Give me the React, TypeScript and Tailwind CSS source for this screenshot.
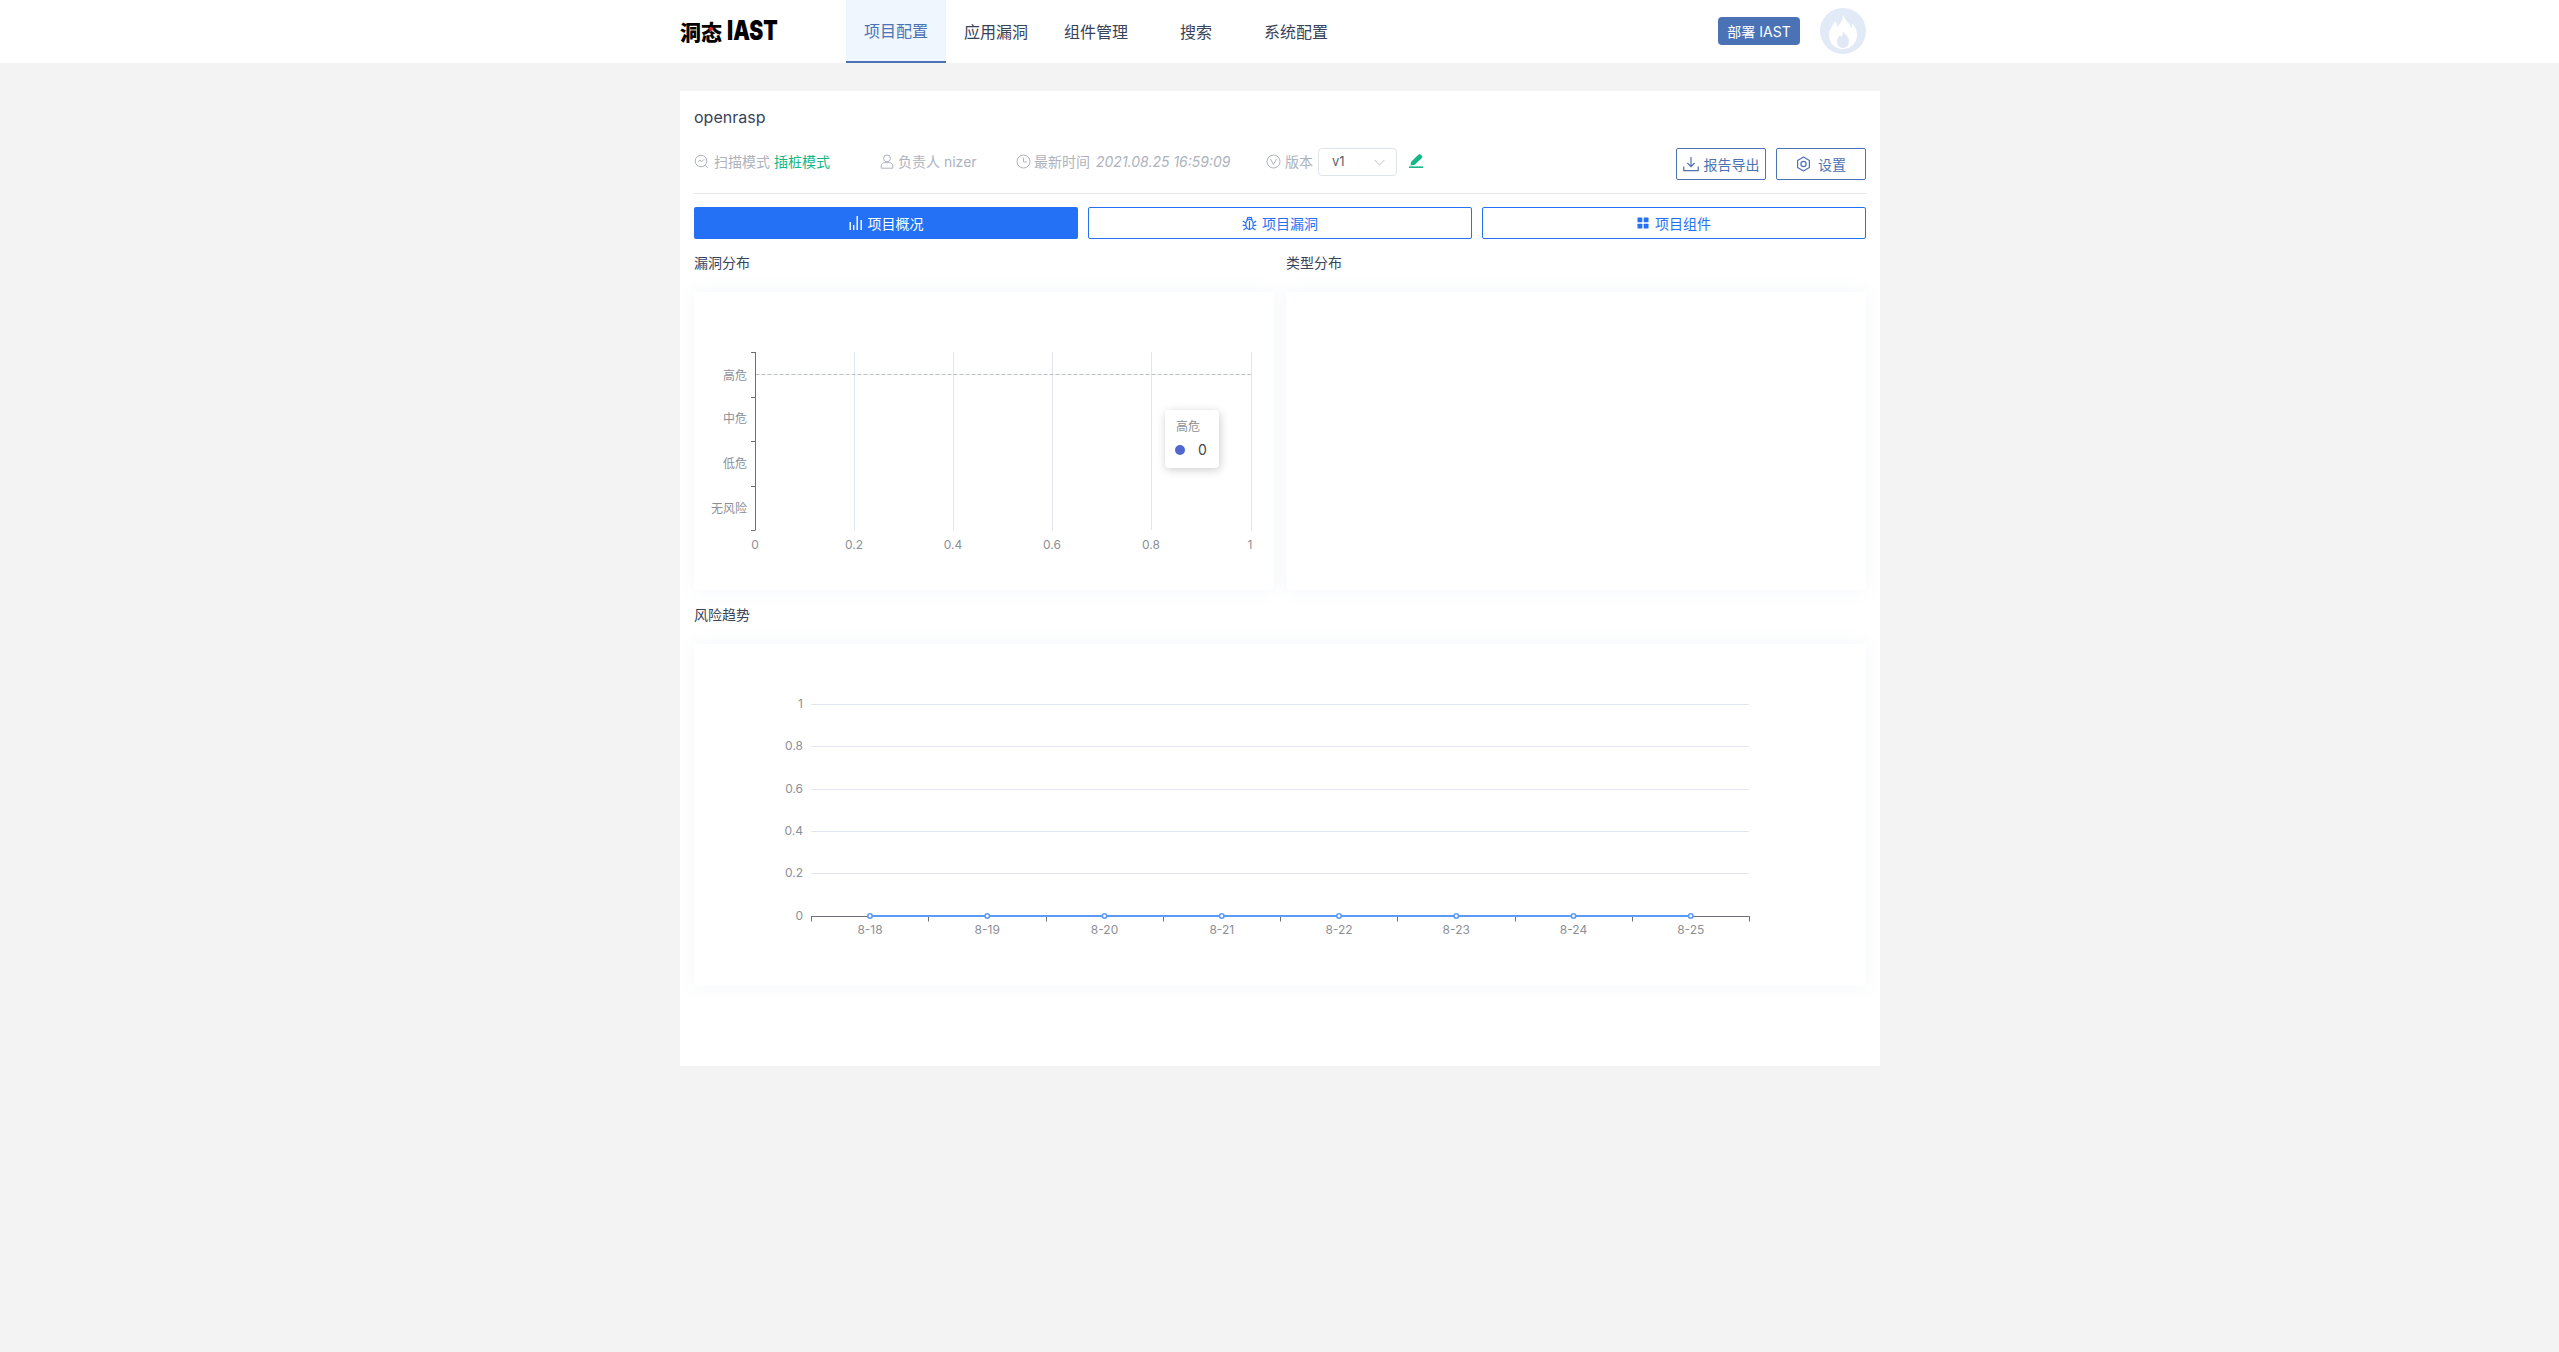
import React from "react";

const FONT = "font-['Inter','Noto_Sans_CJK_SC',sans-serif]";
const svgFont = { fontFamily: "Inter, 'Noto Sans CJK SC', sans-serif" };

function ScanIcon() {
  return (
    <svg width="15" height="15" viewBox="0 0 15 15" fill="none" stroke="#aeb3bd" strokeWidth="1">
      <circle cx="7" cy="7" r="5.8" />
      <path d="M11.2 11.2 L14 14" />
      <path d="M3.8 8 L6 6 L7.6 7.8 L10 5.4" />
    </svg>
  );
}
function UserIcon() {
  return (
    <svg width="14" height="15" viewBox="0 0 14 15" fill="none" stroke="#aeb3bd" strokeWidth="1">
      <circle cx="7" cy="4.4" r="3.4" />
      <path d="M1.2 14.2 V12 C1.2 9.8 3 8.6 4.6 8.6 H9.4 C11 8.6 12.8 9.8 12.8 12 V14.2 Z" />
    </svg>
  );
}
function ClockIcon() {
  return (
    <svg width="15" height="15" viewBox="0 0 15 15" fill="none" stroke="#aeb3bd" strokeWidth="1">
      <circle cx="7.5" cy="7.5" r="6.5" />
      <path d="M7.5 3.6 V8 H11" />
    </svg>
  );
}
function VersionIcon() {
  return (
    <svg width="15" height="15" viewBox="0 0 15 15" fill="none" stroke="#aeb3bd" strokeWidth="1">
      <circle cx="7.5" cy="7.5" r="6.5" />
      <path d="M4.6 5 L7.5 10.6 L10.4 5" />
    </svg>
  );
}
function EditIcon() {
  return (
    <svg width="14" height="14" viewBox="0 0 14 14" fill="#12b886">
      <path d="M2 8 L9 1 L11 0 L13.5 2.4 L12.4 4.6 L5.4 11 L1.6 11.6 Z" />
      <rect x="0" y="12.4" width="14" height="1.6" />
    </svg>
  );
}
function DownloadIcon() {
  return (
    <svg width="16" height="16" viewBox="0 0 16 16" fill="none" stroke="#4a72b4" strokeWidth="1.2">
      <path d="M8 1 V10.5 M4.4 7 L8 10.6 L11.6 7" />
      <path d="M0.8 10.4 V14.6 H15.2 V10.4" />
    </svg>
  );
}
function GearIcon() {
  return (
    <svg width="15" height="16" viewBox="0 0 15 16" fill="none" stroke="#4a72b4" strokeWidth="1.2">
      <path d="M7.5 1 L13.4 4.4 V11.6 L7.5 15 L1.6 11.6 V4.4 Z" strokeLinejoin="round" />
      <circle cx="7.5" cy="8" r="2.6" />
    </svg>
  );
}
function BarsIcon() {
  return (
    <svg width="14" height="14" viewBox="0 0 14 14" fill="#ffffff">
      <rect x="0.5" y="6" width="1.4" height="8" />
      <rect x="4" y="9" width="1.4" height="5" />
      <rect x="7.5" y="0" width="1.4" height="14" />
      <rect x="11.5" y="4" width="1.4" height="10" />
    </svg>
  );
}
function BugIcon() {
  return (
    <svg width="15" height="16" viewBox="0 0 15 16" fill="none" stroke="#2571f5" strokeWidth="1.2">
      <ellipse cx="7.5" cy="9.4" rx="3.7" ry="5" />
      <path d="M5 5.4 C5 3.4 6 2.4 7.5 2.4 C9 2.4 10 3.4 10 5.4" />
      <path d="M7.5 6 V14.4 M5.4 2 L6.2 3 M9.6 2 L8.8 3" />
      <path d="M3.8 8 L0.8 6 M3.8 10.4 H0.6 M4.4 13 L1.4 15 M11.2 8 L14.2 6 M11.2 10.4 H14.4 M10.6 13 L13.6 15" />
    </svg>
  );
}
function GridIcon() {
  return (
    <svg width="12" height="12" viewBox="0 0 12 12" fill="#2571f5">
      <rect x="0.5" y="0.5" width="4.8" height="4.8" rx="0.5" />
      <rect x="6.7" y="0.5" width="4.8" height="4.8" rx="0.5" />
      <rect x="0.5" y="6.7" width="4.8" height="4.8" rx="0.5" />
      <rect x="6.7" y="6.7" width="4.8" height="4.8" rx="0.5" />
    </svg>
  );
}
function FlameAvatar() {
  return (
    <div className="w-[46px] h-[46px] -mt-[1px] rounded-full bg-[#e1eaf6] flex items-center justify-center">
      <svg width="28" height="36" viewBox="0 0 28 36">
        <path
          d="M14 1 C15 7 21 10 22 15 C23 13 23.5 12 23.5 10.5 C26.5 14 28 18 28 22 C28 30 22 36 14 36 C6 36 0 30 0 22 C0 16 4 13 6 8 C7.5 10 8 11.5 8 14 C11.5 11 14 7 14 1 Z"
          fill="#ffffff"
        />
        <path
          d="M14 18 C15 21 20 23 20 28 C20 32 17.5 35 14 35 C10.5 35 8 32 8 28 C8 25 10 24 11 22 C11.5 23 12 23.5 12.5 24 C13.5 22.5 14 20.5 14 18 Z"
          fill="#dfe8f4"
        />
      </svg>
    </div>
  );
}

function Logo() {
  return (
    <div className="w-[166px] h-full flex items-center">
      <span className="relative block w-[97px] h-[24px] -mt-[1px] leading-[24px] text-black whitespace-nowrap">
        <span className="absolute left-0 top-0 text-[21px] font-black font-['Noto_Sans_CJK_SC']">洞态</span>
        <span className="absolute left-[47px] top-0 text-[27px] font-black font-['Inter'] origin-left scale-x-[0.78]">IAST</span>
        <span className="absolute left-[29px] top-[8px] w-[4px] h-[4px] rounded-full bg-[#e0262b]" />
      </span>
    </div>
  );
}

function NavItem({ label, active }: { label: string; active?: boolean }) {
  return (
    <div
      className={
        active
          ? "w-[100px] h-full flex items-center justify-center text-[16px] bg-[#eff6fd] text-[#4a72b4] border-b-2 border-[#4a72b4]"
          : "w-[100px] h-full flex items-center justify-center text-[16px] text-[#38435a]"
      }
    >
      {label}
    </div>
  );
}

function BarChart() {
  const gx = [160, 259, 358, 457, 557];
  const ticks = [60, 104.5, 149, 194, 238];
  const ylabels: [string, number][] = [
    ["高危", 84.5],
    ["中危", 127.5],
    ["低危", 172.5],
    ["无风险", 217.5],
  ];
  const xlabels: [string, number][] = [
    ["0", 61],
    ["0.2", 160],
    ["0.4", 259],
    ["0.6", 358],
    ["0.8", 457],
    ["1", 556],
  ];
  return (
    <svg width="580" height="298" style={svgFont}>
      {gx.map((x) => (
        <line key={x} x1={x + 0.5} x2={x + 0.5} y1="60" y2="238" stroke="#e0e6f1" />
      ))}
      <line x1="61.5" x2="557" y1="82.5" y2="82.5" stroke="#b9bfcc" strokeDasharray="4 2" />
      <line x1="61.5" x2="61.5" y1="60" y2="238" stroke="#6e7079" />
      {ticks.map((y) => (
        <line key={y} x1="57" x2="61.5" y1={Math.round(y) + 0.5} y2={Math.round(y) + 0.5} stroke="#6e7079" />
      ))}
      {ylabels.map(([t, y]) => (
        <text key={t} x="53" y={y} textAnchor="end" dominantBaseline="middle" fontSize="12" fill="#8d8f96">
          {t}
        </text>
      ))}
      {xlabels.map(([t, x]) => (
        <text key={t} x={x} y="253.5" textAnchor="middle" dominantBaseline="middle" fontSize="12" fill="#8d8f96">
          {t}
        </text>
      ))}
    </svg>
  );
}

function LineChart() {
  const ys: [string, number][] = [
    ["1", 60],
    ["0.8", 102],
    ["0.6", 145],
    ["0.4", 187],
    ["0.2", 229],
  ];
  const days = ["8-18", "8-19", "8-20", "8-21", "8-22", "8-23", "8-24", "8-25"];
  const step = 117.25;
  return (
    <svg width="1172" height="342" style={svgFont}>
      {ys.map(([t, y]) => (
        <g key={t}>
          <line x1="117" x2="1055" y1={y + 0.5} y2={y + 0.5} stroke="#e0e6f1" />
          <text x="109" y={y + 1} textAnchor="end" dominantBaseline="middle" fontSize="12" fill="#8d8f96">
            {t}
          </text>
        </g>
      ))}
      <text x="109" y="272.5" textAnchor="end" dominantBaseline="middle" fontSize="12" fill="#8d8f96">
        0
      </text>
      <line x1="117" x2="1056" y1="272.5" y2="272.5" stroke="#6e7079" />
      {Array.from({ length: 9 }).map((_, i) => {
        const x = Math.round(117 + step * i) + 0.5;
        return <line key={i} x1={x} x2={x} y1="272" y2="277.5" stroke="#6e7079" />;
      })}
      <line x1="176" x2={176 + step * 7} y1="272" y2="272" stroke="#5b9bf8" strokeWidth="2" />
      {days.map((d, i) => {
        const x = 176 + step * i;
        return (
          <g key={d}>
            <circle cx={x} cy="272" r="2.2" fill="#ffffff" stroke="#5b9bf8" strokeWidth="1.6" />
            <text x={x} y="287" textAnchor="middle" dominantBaseline="middle" fontSize="12" fill="#8d8f96">
              {d}
            </text>
          </g>
        );
      })}
    </svg>
  );
}

const cardClass = "bg-white shadow-[0_0_16px_rgba(120,140,190,0.08)]";

export default function App() {
  return (
    <div className={`min-h-screen bg-[#f3f3f3] ${FONT} pb-[1px]`}>
      <header className="h-[63px] bg-white">
        <div className="ml-[680px] w-[1186px] h-full flex items-center">
          <Logo />
          <nav className="flex h-full">
            <NavItem label="项目配置" active />
            <NavItem label="应用漏洞" />
            <NavItem label="组件管理" />
            <NavItem label="搜索" />
            <NavItem label="系统配置" />
          </nav>
          <button className="ml-auto w-[82px] h-[28px] -mt-[1px] rounded-[4px] bg-[#4a72b4] text-white text-[14px] flex items-center justify-center">
            部署 IAST
          </button>
          <div className="ml-[20px]">
            <FlameAvatar />
          </div>
        </div>
      </header>

      <main className="mt-[28px] ml-[680px] w-[1200px] h-[975px] bg-white px-[14px]">
        <h1 className="pt-[14px] pb-[1px] text-[16px] leading-[24px] font-normal text-[#38435a]">openrasp</h1>

        <div className="mt-[18px] h-[32px] flex items-start text-[14px] text-[#aeb3bd]">
          <div className="w-[186px] h-[26px] flex items-center">
            <span className="mr-[5px] flex"><ScanIcon /></span>
            <span>扫描模式</span>
            <span className="ml-[4px] text-[#12b886]">插桩模式</span>
          </div>
          <div className="w-[136px] h-[26px] flex items-center">
            <span className="mr-[4px] flex"><UserIcon /></span>
            <span>负责人 nizer</span>
          </div>
          <div className="w-[250px] h-[26px] flex items-center">
            <span className="mr-[3px] flex"><ClockIcon /></span>
            <span>最新时间</span>
            <span className="ml-[6px] italic">2021.08.25 16:59:09</span>
          </div>
          <div className="h-[28px] flex items-start">
            <div className="h-[26px] flex items-center">
              <span className="mr-[4px] flex"><VersionIcon /></span>
              <span>版本</span>
            </div>
            <div className="ml-[5px] w-[79px] h-[28px] rounded-[4px] border border-[#dfe3ea] flex items-center justify-between pl-[13px] pr-[11px] text-[#606266] text-[13px]">
              <span>v1</span>
              <svg width="11" height="7" viewBox="0 0 11 7" fill="none" stroke="#c0c4cc">
                <path d="M0.5 0.8 L5.5 6 L10.5 0.8" />
              </svg>
            </div>
            <span className="ml-[12px] mt-[6px] flex"><EditIcon /></span>
          </div>
          <div className="ml-auto flex gap-[10px]">
            <button className="w-[90px] h-[32px] rounded-[2px] border border-[#4a72b4] text-[#4a72b4] text-[14px] flex items-center justify-center gap-[5px]">
              <DownloadIcon />
              报告导出
            </button>
            <button className="w-[90px] h-[32px] rounded-[2px] border border-[#4a72b4] text-[#4a72b4] text-[14px] flex items-center justify-center gap-[7px]">
              <GearIcon />
              设置
            </button>
          </div>
        </div>

        <div className="mt-[13px] h-px bg-[#e4e6ea]" />

        <div className="mt-[13px] grid grid-cols-3 gap-[10px]">
          <button className="h-[32px] rounded-[2px] bg-[#2571f5] text-white text-[14px] flex items-center justify-center gap-[5px]">
            <BarsIcon />
            项目概况
          </button>
          <button className="h-[32px] rounded-[2px] border border-[#2571f5] text-[#2571f5] text-[14px] flex items-center justify-center gap-[5px]">
            <BugIcon />
            项目漏洞
          </button>
          <button className="h-[32px] rounded-[2px] border border-[#2571f5] text-[#2571f5] text-[14px] flex items-center justify-center gap-[6px]">
            <GridIcon />
            项目组件
          </button>
        </div>

        <div className="mt-[13px] grid grid-cols-2 gap-x-[12px]">
          <div>
            <div className="text-[14px] leading-[22px] text-[#38435a]">漏洞分布</div>
            <div className={`relative mt-[18px] h-[298px] ${cardClass}`}>
              <BarChart />
              <div className="absolute left-[471px] top-[118px] w-[54px] h-[58px] rounded-[4px] bg-white shadow-[1px_2px_10px_rgba(0,0,0,0.2)] pl-[11px] pt-[8px]">
                <div className="text-[12px] leading-[18px] text-[#8d8f96]">高危</div>
                <div className="mt-[4px] flex items-center">
                  <span className="w-[10px] h-[10px] rounded-full bg-[#5066d1] -ml-[1px]" />
                  <span className="ml-[13px] text-[14px] leading-[20px] text-[#464646]">0</span>
                </div>
              </div>
            </div>
          </div>
          <div>
            <div className="text-[14px] leading-[22px] text-[#38435a]">类型分布</div>
            <div className={`mt-[18px] h-[298px] ${cardClass}`} />
          </div>
        </div>

        <div className="mt-[14px] text-[14px] leading-[22px] text-[#38435a]">风险趋势</div>
        <div className={`mt-[18px] h-[342px] ${cardClass}`}>
          <LineChart />
        </div>
      </main>
    </div>
  );
}
